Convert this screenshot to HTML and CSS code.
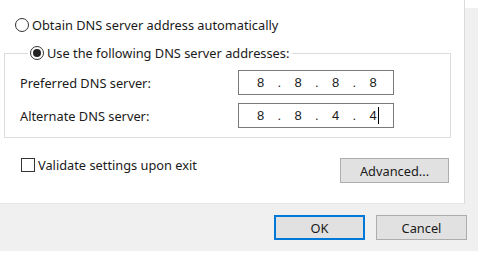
FILE: index.html
```html
<!DOCTYPE html>
<html>

<head>
  <meta charset="UTF-8">
  <title>DNS server settings</title>
  <link rel="stylesheet" href="styles.css">
</head>

<body>

  <div class="dialog">

    <div class="page">

      <label class="option first">
        <span class="radio"></span>
        Obtain DNS server address automatically
      </label>

      <fieldset class="group">
        <legend>
          <label class="option">
            <span class="radio checked"></span>
            Use the following DNS server addresses:
          </label>
        </legend>

        <div class="row">
          <span class="row-label">Preferred DNS server:</span>
          <div class="ip">
            <span class="octet">8</span><span class="dot">.</span>
            <span class="octet">8</span><span class="dot">.</span>
            <span class="octet">8</span><span class="dot">.</span>
            <span class="octet last">8</span>
          </div>
        </div>

        <div class="row">
          <span class="row-label">Alternate DNS server:</span>
          <div class="ip">
            <span class="octet">8</span><span class="dot">.</span>
            <span class="octet">8</span><span class="dot">.</span>
            <span class="octet">4</span><span class="dot">.</span>
            <span class="octet last">4<span class="caret"></span></span>
          </div>
        </div>
      </fieldset>

      <div class="extra">
        <label class="option">
          <span class="checkbox"></span>
          Validate settings upon exit
        </label>
        <button class="button advanced">Advanced...</button>
      </div>

    </div>

    <div class="footer">
      <button class="button default">OK</button>
      <button class="button">Cancel</button>
    </div>

  </div>

</body>

</html>
```

FILE: styles.css
```css
body {
  margin: 0;
  width: 478px;
  height: 263px;
  background: #fff;
  color: #1a1a1a;
  font-family: "Noto Sans", sans-serif;
  font-size: 12.8px;
  overflow: hidden;
}

.dialog {
  height: 251px;
  background: linear-gradient(#fff 8px, #f0f0f0 8px);
}

/* white tab page */
.page {
  box-sizing: border-box;
  width: 465px;
  height: 204px;
  background: #fff;
  border-right: 1px solid #dadada;
  border-bottom: 1px solid #e6e6e6;
  padding-top: 17px;
}

.option {
  display: flex;
  align-items: center;
  gap: 3px;
  height: 16px;
  line-height: 16px;
  white-space: nowrap;
}

.option.first {
  margin-left: 15px;
}

.radio {
  box-sizing: border-box;
  width: 14px;
  height: 14px;
  border: 1px solid #333;
  border-radius: 50%;
  display: flex;
  align-items: center;
  justify-content: center;
}

.radio.checked::after {
  content: "";
  width: 8px;
  height: 8px;
  border-radius: 50%;
  background: #222;
}

.checkbox {
  box-sizing: border-box;
  width: 14px;
  height: 14px;
  border: 1px solid #333;
}

/* group box */
.group {
  box-sizing: border-box;
  width: 447px;
  margin: 12px 0 0 4px;
  padding: 0 0 9px 15px;
  border: 1px solid #dcdcdc;
}

.group legend {
  margin-left: 8px;
  padding: 0 3px 0 2px;
}

.row {
  display: flex;
  align-items: center;
  justify-content: space-between;
  margin-top: 9px;
  padding-right: 56px;
}

.row + .row {
  margin-top: 8px;
}

.ip {
  box-sizing: border-box;
  width: 156px;
  height: 25px;
  border: 1px solid #7a7a7a;
  display: flex;
  align-items: center;
  padding-left: 5px;
  font-family: "Liberation Sans", sans-serif;
  font-size: 13px;
}

.octet {
  width: 33px;
  text-align: center;
  position: relative;
}

.dot {
  width: 4.5px;
  text-align: center;
}

.caret {
  position: absolute;
  top: -1px;
  margin-left: 1px;
  width: 1px;
  height: 17px;
  background: #000;
}

.extra {
  display: flex;
  justify-content: space-between;
  align-items: flex-start;
  margin-top: 19px;
  padding: 0 15px 0 21px;
}

.button {
  box-sizing: border-box;
  height: 25px;
  background: #e1e1e1;
  border: 1px solid #adadad;
  font-family: "Noto Sans", sans-serif;
  font-size: 12.8px;
  color: #1a1a1a;
  padding: 0;
}

.advanced {
  width: 109px;
  margin-top: 1px;
}

.footer {
  display: flex;
  justify-content: flex-end;
  gap: 11px;
  padding: 11px 11px 0 0;
}

.footer .button {
  width: 91px;
}

.button.default {
  border: 2px solid #0078d7;
}
```
